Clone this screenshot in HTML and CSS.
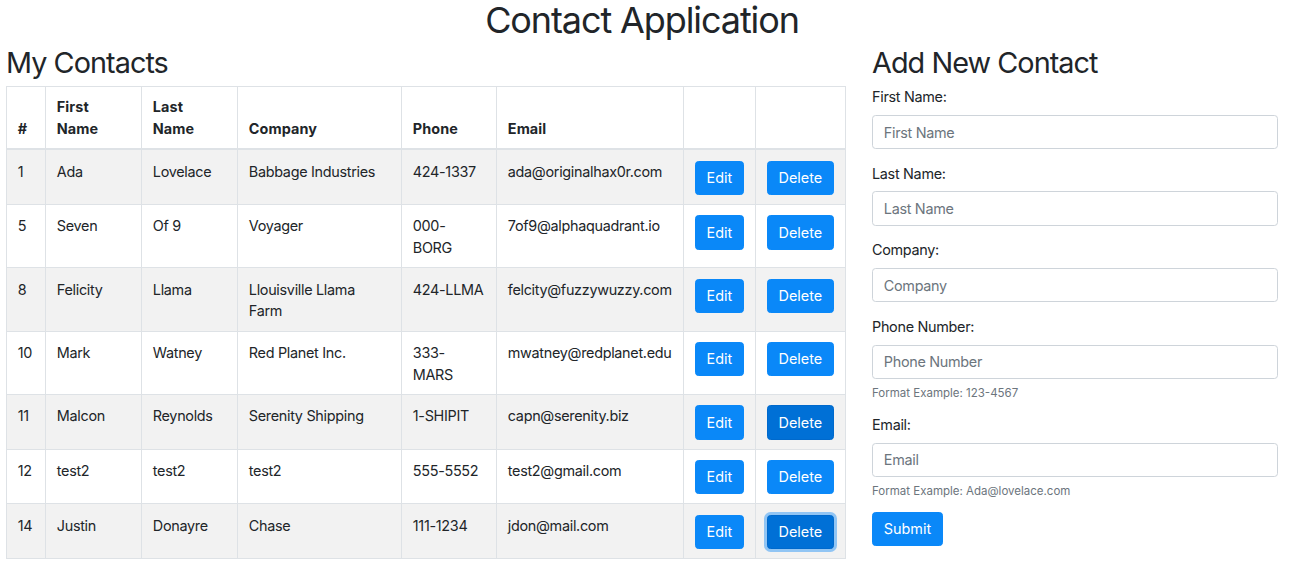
FILE: index.html
```html
<!DOCTYPE html>
<html lang="en">
<head>
<meta charset="utf-8">
<title>Contact Application</title>
<link rel="stylesheet" href="styles.css">
</head>
<body>
<h1 class="app-title">Contact Application</h1>
<div class="layout">
  <section class="contacts">
    <h2 class="section-title">My Contacts</h2>
    <table class="contact-table">
      <thead>
        <tr>
          <th class="c-id">#</th>
          <th class="c-first">First Name</th>
          <th class="c-last">Last Name</th>
          <th class="c-company">Company</th>
          <th class="c-phone">Phone</th>
          <th class="c-email">Email</th>
          <th class="c-edit"></th>
          <th class="c-del"></th>
        </tr>
      </thead>
      <tbody>
        <tr>
          <td>1</td><td>Ada</td><td>Lovelace</td><td>Babbage Industries</td><td class="phone">424-1337</td><td>ada@originalhax0r.com</td>
          <td><button class="btn">Edit</button></td><td><button class="btn">Delete</button></td>
        </tr>
        <tr>
          <td>5</td><td>Seven</td><td>Of 9</td><td>Voyager</td><td class="phone">000-BORG</td><td>7of9@alphaquadrant.io</td>
          <td><button class="btn">Edit</button></td><td><button class="btn">Delete</button></td>
        </tr>
        <tr>
          <td>8</td><td>Felicity</td><td>Llama</td><td>Llouisville Llama Farm</td><td class="phone">424-LLMA</td><td>felcity@fuzzywuzzy.com</td>
          <td><button class="btn">Edit</button></td><td><button class="btn">Delete</button></td>
        </tr>
        <tr>
          <td>10</td><td>Mark</td><td>Watney</td><td>Red Planet Inc.</td><td class="phone">333-MARS</td><td>mwatney@redplanet.edu</td>
          <td><button class="btn">Edit</button></td><td><button class="btn">Delete</button></td>
        </tr>
        <tr>
          <td>11</td><td>Malcon</td><td>Reynolds</td><td>Serenity Shipping</td><td class="phone">1-SHIPIT</td><td>capn@serenity.biz</td>
          <td><button class="btn">Edit</button></td><td><button class="btn btn-hover">Delete</button></td>
        </tr>
        <tr>
          <td>12</td><td>test2</td><td>test2</td><td>test2</td><td class="phone">555-5552</td><td>test2@gmail.com</td>
          <td><button class="btn">Edit</button></td><td><button class="btn">Delete</button></td>
        </tr>
        <tr>
          <td>14</td><td>Justin</td><td>Donayre</td><td>Chase</td><td class="phone">111-1234</td><td>jdon@mail.com</td>
          <td><button class="btn">Edit</button></td><td><button class="btn btn-focus">Delete</button></td>
        </tr>
      </tbody>
    </table>
  </section>
  <section class="add-form">
    <h2 class="section-title">Add New Contact</h2>
    <form>
      <div class="form-group">
        <label for="first">First Name:</label>
        <input id="first" class="form-control" type="text" placeholder="First Name">
      </div>
      <div class="form-group">
        <label for="last">Last Name:</label>
        <input id="last" class="form-control" type="text" placeholder="Last Name">
      </div>
      <div class="form-group">
        <label for="company">Company:</label>
        <input id="company" class="form-control" type="text" placeholder="Company">
      </div>
      <div class="form-group">
        <label for="phone">Phone Number:</label>
        <input id="phone" class="form-control" type="text" placeholder="Phone Number">
        <small class="form-text">Format Example: 123-4567</small>
      </div>
      <div class="form-group">
        <label for="email">Email:</label>
        <input id="email" class="form-control" type="text" placeholder="Email">
        <small class="form-text">Format Example: Ada@lovelace.com</small>
      </div>
      <button type="button" class="btn">Submit</button>
    </form>
  </section>
</div>
</body>
</html>
```
FILE: styles.css
```css
* { box-sizing: border-box; }
html, body { margin: 0; padding: 0; }
body {
  font-family: Inter, "Noto Sans", "Liberation Sans", sans-serif;
  font-size: 14.4px;
  line-height: 1.5;
  letter-spacing: -0.3px;
  color: #212529;
  background: #fff;
}
.app-title {
  margin: 0 0 6px;
  padding-right: 5px;
  text-align: center;
  font-size: 36px;
  font-weight: 400;
  line-height: 40px;
  letter-spacing: -1.1px;
}
.layout {
  display: flex;
  align-items: flex-start;
  padding: 0 11px 0 6px;
  gap: 26px;
}
.contacts { flex: 0 0 839px; }
.add-form { flex: 1 1 auto; }
.section-title {
  margin: 0 0 5.5px;
  font-size: 28.8px;
  font-weight: 400;
  line-height: 34.56px;
  letter-spacing: -0.95px;
}
.contact-table {
  width: 839px;
  border-collapse: collapse;
  table-layout: fixed;
}
.contact-table th, .contact-table td {
  border: 1px solid #dee2e6;
  padding: 10.5px 10.8px 8.7px;
  text-align: left;
  vertical-align: top;
  line-height: 21.6px;
}
.contact-table td.phone { padding-right: 12.5px; }
.contact-table th {
  vertical-align: bottom;
  font-weight: 700;
  border-bottom-width: 2px;
  padding-top: 9px;
  padding-bottom: 9px;
  letter-spacing: 0.1px;
}
.contact-table tbody tr:nth-child(odd) { background: #f2f2f2; }
.c-id { width: 39px; }
.c-first { width: 96px; }
.c-last { width: 96px; }
.c-company { width: 164px; }
.c-phone { width: 95px; }
.c-email { width: 187px; }
.c-edit { width: 72px; }
.c-del { width: 90px; }
.btn {
  display: inline-block;
  vertical-align: top;
  font-family: inherit;
  font-size: 14.4px;
  line-height: 21.6px;
  letter-spacing: 0;
  padding: 5.4px 10.8px;
  color: #fff;
  background: #0a88f8;
  border: 1px solid #0a88f8;
  border-radius: 3.6px;
  cursor: pointer;
}
.btn-hover { background: #0070d6; border-color: #0069cc; }
.btn-focus {
  background: #0070d6;
  border-color: #0069cc;
  box-shadow: 0 0 0 3px rgba(80, 166, 245, 0.6);
}
form { margin: 0; }
.form-group { margin-bottom: 13.4px; }
label {
  display: block;
  margin-bottom: 7.2px;
  line-height: 21.6px;
}
.form-control {
  display: block;
  width: 100%;
  height: 34.4px;
  padding: 5.4px 10.8px;
  font-family: inherit;
  font-size: 14.4px;
  line-height: 21.6px;
  letter-spacing: -0.3px;
  color: #495057;
  background: #fff;
  border: 1px solid #ced4da;
  border-radius: 3.6px;
}
.form-control::placeholder { color: #6c757d; opacity: 1; }
.form-text {
  display: block;
  margin-top: 5.6px;
  font-size: 11.5px;
  line-height: 16px;
  letter-spacing: 0;
  color: #6c757d;
}
```
